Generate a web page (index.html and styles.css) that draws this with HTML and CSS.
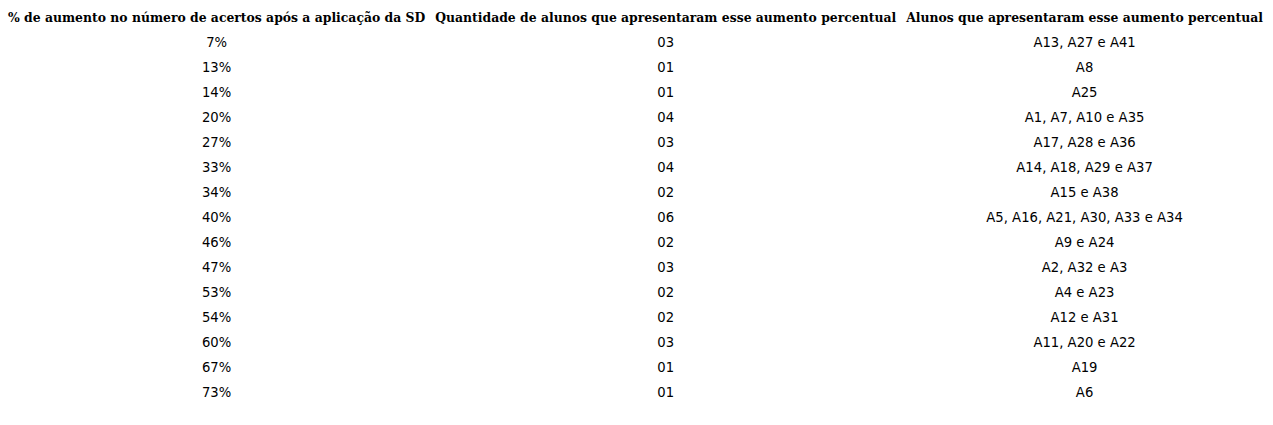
FILE: index.html
```html
<!DOCTYPE html>
<html lang="pt">
<head>
<meta charset="utf-8">
<link rel="stylesheet" href="styles.css">
</head>
<body>
<table class="data">
<thead>
<tr><th>% de aumento no número de acertos após a aplicação da SD</th><th>Quantidade de alunos que apresentaram esse aumento percentual</th><th>Alunos que apresentaram esse aumento percentual</th></tr>
</thead>
<tbody>
<tr><td>7%</td><td>03</td><td>A13, A27 e A41</td></tr>
<tr><td>13%</td><td>01</td><td>A8</td></tr>
<tr><td>14%</td><td>01</td><td>A25</td></tr>
<tr><td>20%</td><td>04</td><td>A1, A7, A10 e A35</td></tr>
<tr><td>27%</td><td>03</td><td>A17, A28 e A36</td></tr>
<tr><td>33%</td><td>04</td><td>A14, A18, A29 e A37</td></tr>
<tr><td>34%</td><td>02</td><td>A15 e A38</td></tr>
<tr><td>40%</td><td>06</td><td>A5, A16, A21, A30, A33 e A34</td></tr>
<tr><td>46%</td><td>02</td><td>A9 e A24</td></tr>
<tr><td>47%</td><td>03</td><td>A2, A32 e A3</td></tr>
<tr><td>53%</td><td>02</td><td>A4 e A23</td></tr>
<tr><td>54%</td><td>02</td><td>A12 e A31</td></tr>
<tr><td>60%</td><td>03</td><td>A11, A20 e A22</td></tr>
<tr><td>67%</td><td>01</td><td>A19</td></tr>
<tr><td>73%</td><td>01</td><td>A6</td></tr>
</tbody>
</table>
</body>
</html>
```

FILE: styles.css
```css
html, body {
  margin: 0;
  padding: 0;
  background: #ffffff;
}
body {
  padding: 5px 0 0 3px;
}
.data {
  border-collapse: collapse;
  color: #000;
}
.data th {
  font-family: "DejaVu Serif", "Liberation Serif", serif;
  font-weight: bold;
  font-size: 12.4px;
  height: 25px;
  padding: 0 5px;
  text-align: center;
  white-space: nowrap;
}
.data td {
  font-family: "DejaVu Sans", "Liberation Sans", sans-serif;
  font-weight: normal;
  font-size: 13.2px;
  height: 24px;
  line-height: 24px;
  padding: 1px 5px 0 5px;
  text-align: center;
  white-space: nowrap;
  color: #000;
}
```
